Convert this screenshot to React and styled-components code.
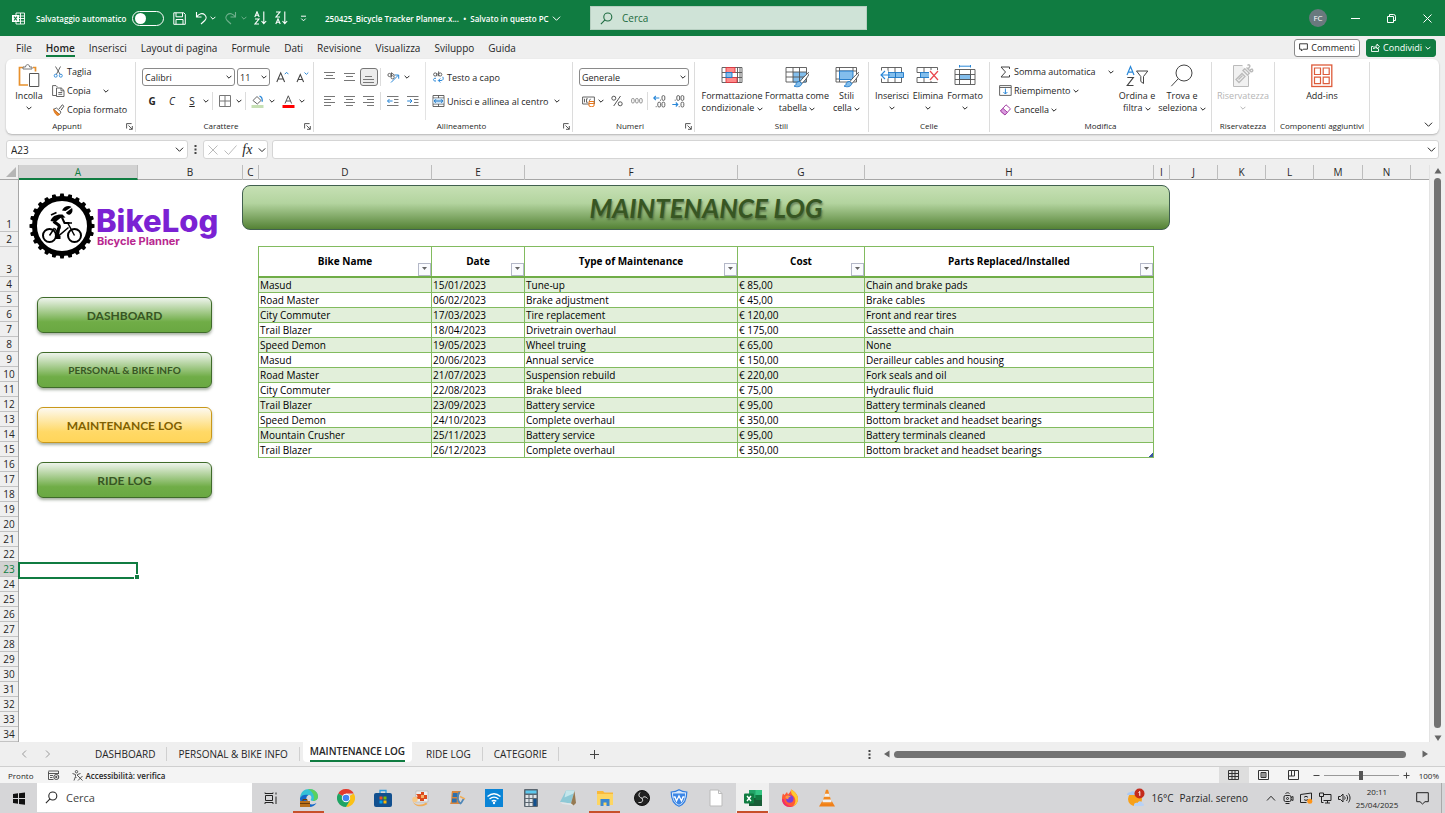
import { useState } from 'react'
import styled, { createGlobalStyle, css } from 'styled-components'

const GREEN = '#107c41'
const UI = '"Open Sans", "Noto Sans", sans-serif'
const SHAPE = 'Lato, "Open Sans", sans-serif'

const columns = [
  ['A', 119], ['B', 105], ['C', 16], ['D', 173], ['E', 93], ['F', 213], ['G', 127],
  ['H', 289], ['I', 16], ['J', 48], ['K', 48], ['L', 48], ['M', 49], ['N', 48],
]

const headers = [
  ['Bike Name', 173], ['Date', 93], ['Type of Maintenance', 213], ['Cost', 127], ['Parts Replaced/Installed', 289],
]

const log = [
  ['Masud', '15/01/2023', 'Tune-up', '€ 85,00', 'Chain and brake pads'],
  ['Road Master', '06/02/2023', 'Brake adjustment', '€ 45,00', 'Brake cables'],
  ['City Commuter', '17/03/2023', 'Tire replacement', '€ 120,00', 'Front and rear tires'],
  ['Trail Blazer', '18/04/2023', 'Drivetrain overhaul', '€ 175,00', 'Cassette and chain'],
  ['Speed Demon', '19/05/2023', 'Wheel truing', '€ 65,00', 'None'],
  ['Masud', '20/06/2023', 'Annual service', '€ 150,00', 'Derailleur cables and housing'],
  ['Road Master', '21/07/2023', 'Suspension rebuild', '€ 220,00', 'Fork seals and oil'],
  ['City Commuter', '22/08/2023', 'Brake bleed', '€ 75,00', 'Hydraulic fluid'],
  ['Trail Blazer', '23/09/2023', 'Battery service', '€ 95,00', 'Battery terminals cleaned'],
  ['Speed Demon', '24/10/2023', 'Complete overhaul', '€ 350,00', 'Bottom bracket and headset bearings'],
  ['Mountain Crusher', '25/11/2023', 'Battery service', '€ 95,00', 'Battery terminals cleaned'],
  ['Trail Blazer', '26/12/2023', 'Complete overhaul', '€ 350,00', 'Bottom bracket and headset bearings'],
]

/* ---------- icons ---------- */

const Icon = ({ w = 16, h = w, vb, children, ...rest }) => (
  <svg width={w} height={h} viewBox={vb || `0 0 ${w} ${h}`} fill="none" stroke="currentColor" aria-hidden="true" {...rest}>
    {children}
  </svg>
)

const Chevron = ({ size = 6, up }) => (
  <Icon w={size} h={size} vb="0 0 8 8" strokeWidth={8 / size}>
    <path d={up ? 'M.8 6 4 2.6 7.2 6' : 'M.8 2.4 4 5.6 7.2 2.4'} />
  </Icon>
)

const ExcelMark = () => (
  <Icon w={13} h={13} vb="0 0 13 13">
    <path d="M4 1h8.500v11H4zM4 4h8.500M4 6.500h8.500M4 9.200h8.500M8.500 1v11" strokeWidth=".9" />
    <path d="M0 3h7v7H0z" fill="currentColor" stroke="none" />
    <path d="M2 4.700 5 8.500M5 4.700 2 8.500" stroke={GREEN} strokeWidth="1.100" />
  </Icon>
)

const SaveIcon = () => (
  <Icon w={13} h={13} strokeWidth="1">
    <path d="M.8.8h10l1.500 1.500v10H.8zM3 .8v4h6.500v-4M3 12.300V7.500h7v4.800" />
  </Icon>
)

const UndoIcon = ({ flip }) => (
  <Icon w={13} h={14} strokeWidth="1.100">
    <g transform={flip ? 'translate(13 0) scale(-1 1)' : undefined}>
      <path d="M1.500 1v5h5M1.700 5.800C4 2.500 7.500 1.600 9.800 3.800c2 2 1.500 4.200 0 5.700L6 13" />
    </g>
  </Icon>
)

const SortIcon = ({ desc }) => {
  const a = 'M.8 6 3 .8 5.200 6M1.500 4.300h3'
  const z = 'M1 1h4L1 6h4'
  return (
    <Icon w={13} h={14} strokeWidth="1.100">
      <path d={desc ? z : a} />
      <path d={desc ? a : z} transform="translate(0 7)" />
      <path d="M9.800.5v12M7.500 10l2.300 2.600L12.200 10" />
    </Icon>
  )
}

const CustomizeIcon = () => (
  <Icon w={7} h={7} strokeWidth="1"><path d="M1 1.200h5M1.300 3.600l2.200 2.200 2.200-2.200" /></Icon>
)

const SearchIcon = ({ size = 12 }) => (
  <Icon w={size} vb="0 0 12 12" strokeWidth="1"><circle cx="7.200" cy="4.600" r="3.700" /><path d="M4.600 7.300.8 11.200" /></Icon>
)

const CommentIcon = () => (
  <Icon w={9} h={9} strokeWidth=".9"><path d="M.6.8h7.800v5.400H4.200L2.400 8V6.200H.6z" /></Icon>
)

const ShareIcon = () => (
  <Icon w={9} h={9} strokeWidth=".9"><path d="M2.500 3.500h-2v5h7v-3M2.500 6C2.700 4 4 3 6 3V1l2.500 2.700L6 6V4.500c-1.500 0-2.700.4-3.500 1.500z" /></Icon>
)

const PasteIcon = () => (
  <Icon w={22} h={24}>
    <path d="M6 3.500H1.500v17.500H10M15 3.500h2.500v4" stroke="#e8912d" strokeWidth="1.700" />
    <path d="M5 5V3h2.500C7.800 1.200 8.600.6 9.600.6s1.800.6 2.100 2.400H14v2z" stroke="#777" fill="#fff" />
    <path d="M11.500 9.500h9.300v13H11.500z" stroke="#555" fill="#fff" />
  </Icon>
)

const CutIcon = () => (
  <Icon w={10} h={12} strokeWidth=".9">
    <path d="M2 .5 6.700 8.500M7 .5 2.800 8.500" stroke="#555" />
    <circle cx="2.200" cy="9.700" r="1.500" stroke="#2b88d8" /><circle cx="7.300" cy="9.700" r="1.500" stroke="#2b88d8" />
  </Icon>
)

const CopyIcon = () => (
  <Icon w={13} h={12} strokeWidth=".9" stroke="#555">
    <path d="M4.500 10.500H.6V.6H4l1.500 1.500M4.500 3h4.800l2.700 2.500v6H4.500zM9 3v2.800h3M6.300 7.500h3.900M6.300 9.300h3.900" />
  </Icon>
)

const PainterIcon = () => (
  <Icon w={12} h={12}>
    <path d="M6.500 5 9.800.8l1.600 1.400L8.500 6.200" stroke="#555" />
    <path d="m1 5.300 3-1.300 4.500 4L7 10.500z" fill="#fff" stroke="#555" strokeWidth=".9" />
    <path d="m1 5.300 6 5.200-2 1.200C3 10.300 1.600 8 1 5.300z" fill="#ef8a2b" stroke="#d9741a" strokeWidth=".9" />
  </Icon>
)

const LauncherIcon = () => (
  <Icon w={7} h={7} strokeWidth=".9" stroke="#444"><path d="M.6 5.500V.6h5M2.500 2.500l3.700 3.700M6.300 3v3.300H3" /></Icon>
)

const FontSizeIcon = ({ down }) => (
  <Icon w={13} h={12}>
    <path d={down ? 'M1 11 4.300 3.500 7.600 11M2.200 8.500h4.200' : 'M.8 11 4.700 1.800 8.600 11M2.200 8h5'} stroke="#444" strokeWidth="1.100" />
    <path d={down ? 'm8.500 1.500 1.900 1.900 1.900-1.900' : 'M8.800 3.200l1.800-1.900 1.800 1.900'} stroke="#2b88d8" />
  </Icon>
)

const BordersIcon = () => (
  <Icon w={12} h={12} strokeWidth="1" stroke="#777"><path d="M.5.5h11v11H.5zM6 .5v11M.5 6h11" /></Icon>
)

const FillIcon = () => (
  <Icon w={13} h={13}>
    <path d="m2 5.500 4-4 4 4L6.300 9z" stroke="#555" strokeWidth=".9" />
    <path d="M8.500 1.200c1.700.5 3 2.300 2.700 5.500" stroke="#2b88d8" strokeWidth="1.300" />
    <path d="M.5 10h12v3H.5z" fill="#c6e0b4" stroke="none" />
  </Icon>
)

const FontColorIcon = () => (
  <Icon w={13} h={13}>
    <path d="M3 8.500 6.300.8l3.300 7.700M4 6h4.500" stroke="#555" strokeWidth="1" />
    <path d="M.5 10h12v3H.5z" fill="#f00" stroke="none" />
  </Icon>
)

const Lines = ({ rows, w = 12 }) => (
  <Icon w={w} h={12} stroke="#777" strokeWidth="1">
    {rows.map(([x1, x2, y]) => <path key={y} d={`M${x1} ${y}H${x2}`} />)}
  </Icon>
)

const alignTop = [[0, 11, 1.5], [2, 9, 4.5], [0, 11, 7.5]]
const alignMid = [[0, 11, 2.5], [2, 9, 5.5], [0, 11, 9.5]]
const alignBottom = [[2, 9, 5.5], [0, 11, 8.5], [0, 11, 11.5]]
const textLeft = [[0, 11, 1.5], [0, 7, 4.5], [0, 11, 7.5], [0, 7, 10.5]]
const textCenter = [[0, 11, 1.5], [2, 9, 4.5], [0, 11, 7.5], [2, 9, 10.5]]
const textRight = [[0, 11, 1.5], [4, 11, 4.5], [0, 11, 7.5], [4, 11, 10.5]]

const OrientIcon = () => (
  <Icon w={13} h={12}>
    <circle cx="2.500" cy="4" r="1.600" stroke="#555" strokeWidth=".9" /><circle cx="5.600" cy="6.300" r="1.600" stroke="#555" strokeWidth=".9" />
    <path d="M4.500 2v3.500M4 1.500 8 4.500" stroke="#555" strokeWidth=".9" />
    <path d="m4 11.500 7.500-7.500M8 4h3.700v3.700" stroke="#2b88d8" />
  </Icon>
)

const IndentIcon = ({ right }) => (
  <Icon w={12} h={12}>
    <path d="M0 1.500h11.500M7 4.500h4.500M7 7.500h4.500M0 10.500h11.500" stroke="#777" />
    <path d={right ? 'M.2 6h4.600M3 4l2 2-2 2' : 'M.6 6h5M2.500 4l-2 2 2 2'} stroke="#2b88d8" />
  </Icon>
)

const WrapIcon = () => (
  <Icon w={11} h={12}>
    <circle cx="2.200" cy="3.500" r="1.600" stroke="#555" strokeWidth=".9" /><circle cx="7.200" cy="3.500" r="1.600" stroke="#555" strokeWidth=".9" />
    <path d="M3.900 2v3.200M5.600.4v4.800" stroke="#555" strokeWidth=".9" />
    <path d="M3 7.300C1 7 .5 8 .5 8.700S1 10.200 3 10M9.800 5.800C10.800 8 10 9.500 8 9.500H5.500M7.300 7.500l-2 2 2 2" stroke="#2b88d8" />
  </Icon>
)

const MergeIcon = () => (
  <Icon w={12} h={12}>
    <path d="M.5.5h11v11H.5zM.5 3h11M.5 9h11M6 .5V3M6 9v2.500" stroke="#555" strokeWidth=".9" />
    <path d="M.9 3.400h10.200v5.200H.9z" fill="#cfe6f8" stroke="none" />
    <path d="M1.700 6h8.600M3.400 4.300 1.700 6l1.700 1.700M8.600 4.300 10.300 6 8.600 7.700" stroke="#1a76c7" />
  </Icon>
)

const CurrencyIcon = () => (
  <Icon w={13} h={12}>
    <path d="M.6 2h11.800v7H.6zM2.500 3.800v3.500M5.800 3.800H4.500v3.500h1.300M8.500 3.800l-1 1.700 1 1.800" stroke="#555" strokeWidth=".9" />
    <path d="M7 6.500h5V11c-1 .8-4 .8-5 0z" fill="#fff" stroke="#e8791e" /><path d="M7 8.500h5" stroke="#e8791e" />
  </Icon>
)

const PercentIcon = () => (
  <Icon w={12} h={12} stroke="#555"><circle cx="2.800" cy="3.200" r="2" /><circle cx="9.200" cy="8.800" r="2" /><path d="M9.500 1 2.700 11" /></Icon>
)

const ThousandsIcon = () => (
  <Icon w={12} h={8} stroke="#888" strokeWidth=".9"><rect x=".6" y="1.500" width="2.600" height="4.500" rx="1.200" /><rect x="4.600" y="1.500" width="2.600" height="4.500" rx="1.200" /><rect x="8.600" y="1.500" width="2.600" height="4.500" rx="1.200" /></Icon>
)

const DecimalIcon = ({ less }) => (
  <Icon w={13} h={13} strokeWidth=".9" stroke="#555">
    <rect x="9" y=".6" width="2.800" height="4.800" rx="1.300" /><rect x="9" y="7.200" width="2.800" height="4.800" rx="1.300" />
    {less ? <rect x="4.800" y=".6" width="2.800" height="4.800" rx="1.300" /> : <rect x="4.800" y="7.200" width="2.800" height="4.800" rx="1.300" />}
    <path d={less ? 'M2.700 5.200h1M6.700 11.700h1' : 'M7 5.200h1M2.700 11.700h1'} />
    <path d={less ? 'M.3 9.500h5.500M3.800 7.500l2 2-2 2' : 'M.8 3h5.500M2.800 1l-2 2 2 2'} stroke="#2b88d8" strokeWidth="1.100" />
  </Icon>
)

const CondFormatIcon = () => (
  <Icon w={22} h={22}>
    <path d="M1 2.500h20v15H1zM1 7.500h20M1 12.500h20M16.500 2.500v15M19 2.500v15" stroke="#555" strokeWidth=".9" />
    <path d="M5 2.500h9v5H5zM5 12.500h11v5H5z" fill="#ff8a8a" stroke="#d9363e" strokeWidth=".9" />
    <path d="M5 7.500h6v5H5z" fill="#83beec" stroke="#1a76c7" strokeWidth=".9" />
  </Icon>
)

const Brush = () => (
  <>
    <path d="M23.500 7.500c-3 2.500-7 7-8.500 9l1.800 2c2.500-2 6-6.500 7.500-10z" fill="#fff" stroke="#444" strokeWidth=".9" />
    <path d="M14.500 16.500c-2.500 0-3.500 1.500-3.500 3-.5 1-1 1.200-2 1.500 3 1.500 7.500.8 7.700-2.700z" fill="#83beec" stroke="#1a76c7" strokeWidth=".9" />
  </>
)

const FormatTableIcon = () => (
  <Icon w={24} h={22}>
    <path d="M8 7h13v11H8z" fill="#83beec" stroke="none" />
    <path d="M1 2.500h20.500v14.500H1zM1 7h20.500M1 12h20.500M8 2.500v14.500M14.500 2.500v14.500" stroke="#555" strokeWidth=".9" />
    <Brush />
  </Icon>
)

const CellStyleIcon = () => (
  <Icon w={24} h={22}>
    <path d="M1 2.500h20.500v14.500H1zM1 6h20.500M4.500 2.500v14.500M18 2.500V6M1 14h4" stroke="#555" strokeWidth=".9" />
    <path d="M4.500 6h13.500v8.500H4.500z" fill="#83beec" stroke="#1a76c7" strokeWidth=".9" />
    <Brush />
  </Icon>
)

const InsertCellsIcon = () => (
  <Icon w={24} h={22}>
    <path d="M1.500 2.500h20v15h-20zM8 2.500v15M15 2.500v15" stroke="#555" strokeWidth=".9" />
    <path d="M8 7.500h15.500v5H8z" fill="#83beec" stroke="#1a76c7" strokeWidth=".9" />
    <path d="M15.500 7.500v5" stroke="#1a76c7" />
    <path d="M0 5.500h8v8H0z" fill="#fff" stroke="none" />
    <path d="M1 10h9M5 6l-4 4 4 4" stroke="#2b88d8" strokeWidth="1.100" />
  </Icon>
)

const DeleteCellsIcon = () => (
  <Icon w={24} h={22}>
    <path d="M1 7.500v-5h20.500v5M1 12.500v5h20.500M8 2.500v5M15 2.500v5M8 12.500v5M15 12.500v5M1 7.500h4M1 12.500h4" stroke="#555" strokeWidth=".9" />
    <path d="M4.500 7.500h10v5h-10z" fill="#83beec" stroke="#1a76c7" strokeWidth=".9" />
    <path d="M13 5h10v11H13z" fill="#fff" stroke="none" />
    <path d="m14 6 8 9M22 6l-8 9" stroke="#e8464e" strokeWidth="1.200" />
  </Icon>
)

const FormatCellsIcon = () => (
  <Icon w={22} h={22}>
    <path d="M5.500 9.500h11v5h-11z" fill="#83beec" stroke="#1a76c7" strokeWidth=".9" />
    <path d="M1 4.500h20v15H1zM1 9.500h20M1 14.500h20M5.500 4.500v15M16.500 4.500v15" stroke="#555" strokeWidth=".9" />
    <path d="M5.500 1.200h11M5.500 0v2.500M16.500 0v2.500" stroke="#2b88d8" />
  </Icon>
)

const SigmaIcon = () => (
  <Icon w={12} h={12} stroke="#444"><path d="M10 3V1H1.500L6 6l-4.500 5H10V9" /></Icon>
)

const FillDownIcon = () => (
  <Icon w={13} h={11}>
    <path d="M.6.600h11.600v9.800H.6zM.6 2.500h11.600" stroke="#555" strokeWidth=".9" />
    <path d="M6.400 3.500v5.500M4.400 7l2 2 2-2" stroke="#2b88d8" />
  </Icon>
)

const EraserIcon = () => (
  <Icon w={12} h={12}>
    <path d="M1 7 6.500.8l4.500 4L5.500 11z" fill="#fff" stroke="#a645a6" />
    <path d="m1 7 4.500 4 2.400-2.700L3.400 4.300z" fill="#d99ade" stroke="#a645a6" />
  </Icon>
)

const SortFilterIcon = () => (
  <Icon w={24} h={22}>
    <path d="M2 10 5.500 1.500 9 10M3.200 7.200h4.700" stroke="#2b88d8" strokeWidth="1.200" />
    <path d="M2.300 12.500h6L2.300 20.500h6.200" stroke="#444" strokeWidth="1.200" />
    <path d="M11.500 6h11.300L18.500 11.500v7l-2.700-2v-5z" stroke="#444" />
  </Icon>
)

const FindIcon = () => (
  <Icon w={24} h={24} stroke="#444"><circle cx="14" cy="9" r="8" /><path d="m8.300 14.700-7 7.500" /></Icon>
)

const PrivacyIcon = () => (
  <Icon w={22} h={24} stroke="#bbb">
    <path d="M16.500 11.500v11H1.500V1.500h9" fill="#f1f1f1" />
    <path d="m4 15.500 6-6 3 3-6 6zM6.500 15.500l4-4" strokeWidth="1.300" />
    <path d="m11 6.500 4.500 4.500 1.800-1.800-4.500-4.500zM14.500 3.500l4 4M15.500 1.500c1.500-1.500 3 0 2 1.500l-1 1.500M18.500 7.500c2 1 3-1 1.500-2.500L18 6" strokeWidth="1.400" />
  </Icon>
)

const AddinsIcon = () => (
  <Icon w={22} h={24} stroke="#dd5b3a">
    <rect x=".8" y="1" width="20" height="21.500" strokeWidth="1.300" />
    <path d="M3.500 4h6v6.500h-6zM12.200 4h6v6.500h-6zM3.500 13.200h6v6.500h-6zM12.200 13.200h6v6.500h-6z" strokeWidth="1.200" />
  </Icon>
)

const DotsIcon = () => (
  <Icon w={3} h={9} stroke="none" fill="#444"><path d="M.5 0h2v2h-2zM.5 3.500h2v2h-2zM.5 7h2v2h-2z" /></Icon>
)

const Triangle = ({ dir }) => (
  <Icon w={8} h={8} stroke="none" fill="#666">
    <path d={{ up: 'M4 1l3.500 5.500h-7z', down: 'M4 7 .5 1.500h7z', left: 'M1 4l5.500-3.500v7z', right: 'M7 4 1.500.500v7z' }[dir]} />
  </Icon>
)

/* gear with cyclist, used in the planner logo */
const BikeBadge = () => (
  <svg width="66" height="66" viewBox="0 0 66 66" aria-hidden="true">
    {Array.from({ length: 24 }, (_, i) => (
      <path key={i} d="M30.500 4.500 31.300.500h3.400l.8 4z" transform={`rotate(${i * 15} 33 33)`} />
    ))}
    <circle cx="33" cy="33" r="27.500" fill="#fff" stroke="#000" strokeWidth="5" />
    <g fill="none" stroke="#000">
      <circle cx="20.500" cy="42.500" r="6.500" strokeWidth="2" />
      <circle cx="45.500" cy="42.500" r="6.500" strokeWidth="2" />
      <path d="M20.500 42.500 25.500 35M26 35.500l4 7 9.500-8M39 30.500l6.500 12M37.500 30h5.500" strokeWidth="1.500" />
      <path d="M24.500 28.500c4 2.500 7.500 4 5 7.500l-1.500 8.500h3.500" strokeWidth="3.200" />
      <path d="m33 24.500 2.500 5.500h5" strokeWidth="2" />
      <path d="m22 22 5.500-2.500" strokeWidth="1.800" />
    </g>
    <path d="M21.500 28c1.500-5 6-7 12-6.500l3 3-5 .5-5 4z" />
    <path d="M33 17.500c2-4.500 7-5.500 9.500-3.500L36.500 18zM37 19.500l6-4.500c1 2 .5 5.500-2 6.500-1.500.6-3.500-.2-4-2z" />
  </svg>
)

/* task bar pictures */
const StartIcon = () => (
  <Icon w={14} h={13} stroke="none" fill="#111"><path d="M1 2l5-.7V6H1zM7 1.200 13 .4V6H7zM1 7h5v4.700L1 11zM7 7h6v5.700l-6-.8z" /></Icon>
)
const TaskViewIcon = () => (
  <Icon w={14} h={13} stroke="#222"><path d="M1.500 3.500h7v5h-7zM1 .5v1h8v-1M1 12v-1.500h8V12M12 4.500V12M12 .5v2" /></Icon>
)
const EdgeIcon = () => (
  <Icon w={20} h={20} stroke="none">
    <path d="M1 10C1.500 4 5.500.8 10.500 1c5 .2 8.500 3.700 8.500 7.500 0 3-2.500 4.500-5 4.500-2 0-2.700-1-2-2 .8-1.500.5-4-2.500-4C6 7 3 8 1 10z" fill="#35c1d6" />
    <path d="M9 1.100c5.500-.7 10 3 10 7.400 0 3-2.500 4.500-5 4.500 3-4-1-10-5-11.900z" fill="#5bd15c" />
    <path d="M1 10c1.500-3 5-4 8.500-3-3 1.500-3 6 .5 8.500 2.500 1.500 5 1 7.500-.5-2 3-5 4.500-8 4C4 18.500.7 15 1 10z" fill="#1468c8" />
    <path d="M1 13h10v6H1z" fill="#b8711c" /><path d="M4 13v-1.500h4V13M1 15.500h10" stroke="#6b3d0a" />
  </Icon>
)
const ChromeIcon = () => (
  <Icon w={18} h={18} stroke="none">
    <path d="M9 9 1.200 4.500A9 9 0 0 1 16.800 4.500H9z" fill="#e33b2e" />
    <path d="M9 9l7.800-4.500A9 9 0 0 1 9 18l4-7z" fill="#fbc116" />
    <path d="M9 9l4 2.300L9 18A9 9 0 0 1 1.200 4.500z" fill="#1fa463" />
    <circle cx="9" cy="9" r="4.200" fill="#fff" /><circle cx="9" cy="9" r="3.300" fill="#4285f4" />
  </Icon>
)
const StoreIcon = () => (
  <Icon w={18} h={18} stroke="none">
    <path d="M6 5V1.500h6V5" stroke="#2a9de0" strokeWidth="1.300" /><rect y="4" width="18" height="14" rx="2" fill="#12508f" />
    <path d="M5.500 7.500h3v3h-3z" fill="#f25022" /><path d="M9.500 7.500h3v3h-3z" fill="#7fba00" />
    <path d="M5.500 11.500h3v3h-3z" fill="#00a4ef" /><path d="M9.500 11.500h3v3h-3z" fill="#ffb900" />
  </Icon>
)
const PhotoIcon = () => (
  <Icon w={18} h={18} stroke="none">
    <path d="M5 2h12v11H4z" fill="#eee" stroke="#bbb" strokeWidth=".8" />
    <path d="M5 5h5v-2h3v3h3v4h-3v2H9v-2H5.500V7.500H7z" fill="#dc4a1c" /><path d="M10 6h3v3h-3z" fill="#f7b267" />
    <path d="M1.500 11c1 5.500 9 6 13.500 2.500L16.500 15c-5.500 4-14 3-15-4z" fill="#f1ad57" /><circle cx="4" cy="10.500" r="2.700" fill="#f6c987" />
  </Icon>
)
const FilmIcon = () => (
  <Icon w={18} h={18} stroke="none">
    <path d="M4 2h9c-3 4-3 9 0 13H2c2-3 1-9 2-13z" fill="#d9863d" /><path d="M5 4h4.500v4H4.500zM4 9.500h4.700v4H4z" fill="#2f70ad" />
    <path d="M11.500 3c-2.500 4-2.500 9 1 11.500 1.500-.5 1.500-3.500 3.500-4.500" stroke="#4e87b8" strokeWidth="1.700" /><path d="M12 7.500l5 2.500" stroke="#efad58" strokeWidth="1.500" />
  </Icon>
)
const WifiIcon = () => (
  <Icon w={18} h={18} stroke="#fff">
    <path d="M0 0h18v18H0z" fill="#0a84d6" stroke="none" />
    <path d="M2.500 7.500c4-3.500 9-3.500 13 0M4.500 10c3-2.500 6-2.500 9 0M6.700 12.300c1.500-1.200 3-1.200 4.600 0" strokeWidth="1.400" />
    <circle cx="9" cy="14" r="1.200" fill="#fff" stroke="none" />
  </Icon>
)
const CalcIcon = () => (
  <Icon w={14} h={18} stroke="none">
    <rect width="14" height="18" rx="1" fill="#5b6670" /><path d="M1.500 1.500h11v3h-11z" fill="#5cc8ee" />
    <path d="M1.500 6h3v3h-3zM5.500 6h3v3h-3zM9.500 6h3v3h-3zM1.500 10h3v3h-3zM5.500 10h3v3h-3zM1.500 14h3v3h-3zM5.500 14h3v3h-3z" fill="#dfe4e8" />
    <path d="M9.500 10h3v7h-3z" fill="#12508f" />
  </Icon>
)
const NotepadIcon = () => (
  <Icon w={18} h={18} stroke="none">
    <path d="M7 1.500h8.500L12 14.500 1 13z" fill="#8ec9d6" /><path d="M7 1.500h8.500l-1 3-9 4z" fill="#c4e6ec" />
    <path d="M15.500 2 17 14l-2.500 2.500L12 14.500z" fill="#967a52" /><path d="m1 13 11 1.500 2.500 2-11-1.500z" fill="#dfe6e8" />
  </Icon>
)
const FolderIcon = () => (
  <Icon w={18} h={16} stroke="none">
    <path d="M1 1h6l1.500 1.500H17V15H1z" fill="#f9b93a" /><path d="M1 4h16v11H1z" fill="#fdd663" />
    <path d="M4.500 16V9h9v7h-3v-3.500h-3V16z" fill="#3a87d0" />
  </Icon>
)
const ObsIcon = () => (
  <Icon w={16} h={16} stroke="#eee" strokeWidth="1">
    <circle cx="8" cy="8" r="7.500" fill="#222" stroke="#111" />
    <path d="M6 2.500c-2.500 3 0 5.500 2 5.500M13.500 8.500c-2.500-3-5-1.500-5.500.5M4.500 12.500c4 .5 5-2 3.500-4" />
  </Icon>
)
const ShieldIcon = () => (
  <Icon w={18} h={18} stroke="#2f7de0">
    <path d="M9 .8C6.500 2.500 4 3 1.200 3c0 7 2 12 7.800 14.300C14.800 15 16.800 10 16.800 3 14 3 11.500 2.500 9 .8z" fill="#d6e7fb" strokeWidth="1.200" />
    <path d="M3 4.500c0 6 2 9.500 6 11.300 4-1.800 6-5.300 6-11.300z" fill="#3b86e6" stroke="none" />
    <path d="M3.500 8h1.500l1.500 4L9 7l2.500 5L13 8h1.500" stroke="#fff" strokeWidth="1.300" />
  </Icon>
)
const PageIcon = () => (
  <Icon w={14} h={18} stroke="#bbb"><path d="M1 1h8.500L13 4.500V17H1z" fill="#fff" /><path d="M9.500 1v3.500H13" /></Icon>
)
const ExcelIcon = () => (
  <Icon w={20} h={18} stroke="none">
    <path d="M6 1h13v16H6z" fill="#21a366" /><path d="M12.500 1H19v5h-6.500z" fill="#33c481" /><path d="M6 9h13v8H6z" fill="#185c37" /><path d="M12.500 6H19v5h-6.500z" fill="#107c41" />
    <rect x="1" y="4.500" width="10" height="10" rx="1" fill="#107c41" /><path d="m4 7 4 5M8 7l-4 5" stroke="#fff" strokeWidth="1.400" />
  </Icon>
)
const FirefoxIcon = () => (
  <Icon w={18} h={18} stroke="none">
    <path d="M2 4.500 3.500 6 6 3l1 2.500C9 3 10 2.500 10 .5c4 2 7 5.500 7 9.500a8 8 0 0 1-16 0c0-2 .3-4 1-5.500z" fill="#ff5a36" />
    <path d="M10 .5c4 2 7 5.500 7 9.500a8 8 0 0 1-5 7.300c3.500-3.300 3-8.300-.5-11.300C10 4.500 10 2.500 10 .5z" fill="#ffca2e" />
    <path d="M1 10c0 5 3.500 8 8 8 1.500 0 2-.2 3-.7-4 .2-8.500-2-9-7.300z" fill="#f0306a" />
    <circle cx="8.800" cy="10" r="3.700" fill="#7b40d9" /><path d="M4.500 7.500C6 6 9 6.300 10 8.200c-2-.5-3 .5-2.500 2-2 0-3.500-1-3-2.700z" fill="#ff9640" />
  </Icon>
)
const VlcIcon = () => (
  <Icon w={16} h={18} stroke="none">
    <path d="M3 12.500h10l3 5H0z" fill="#f08018" /><path d="M7 .8h2L13 15H3z" fill="#f3891f" />
    <path d="M5.900 4.700h4.200l.9 3H5zM4.200 10.500h7.600l.7 2.700h-9z" fill="#f2f2f2" />
  </Icon>
)

const tasks = [
  ['Edge', EdgeIcon, true], ['Chrome', ChromeIcon], ['Store', StoreIcon], ['Foto', PhotoIcon], ['Video', FilmIcon], ['WiFi', WifiIcon],
  ['Calcolatrice', CalcIcon], ['Blocco note', NotepadIcon], ['Esplora file', FolderIcon, true], ['OBS', ObsIcon], ['Sicurezza', ShieldIcon],
  ['Documento', PageIcon], ['Excel', ExcelIcon, true, true], ['Firefox', FirefoxIcon], ['VLC', VlcIcon],
]

/* ---------- page ---------- */

export default function App() {
  const [autosave, setAutosave] = useState(false)
  const [zoom, setZoom] = useState(50)

  return (
    <Window>
      <GlobalStyle />
      <TitleBar>
        <QuickAccess>
          <Slot $w={36}><ExcelMark /></Slot>
          <AutosaveLabel htmlFor="autosave">Salvataggio automatico</AutosaveLabel>
          <Toggle id="autosave" type="checkbox" checked={autosave} onChange={e => setAutosave(e.target.checked)} />
          <TitleButton $w={31} aria-label="Salva"><SaveIcon /></TitleButton>
          <TitleButton $w={12} aria-label="Annulla"><UndoIcon /></TitleButton>
          <TitleButton $w={12} aria-label="Cronologia annulla"><Chevron /></TitleButton>
          <TitleButton $w={22} $dim aria-label="Ripeti"><UndoIcon flip /></TitleButton>
          <TitleButton $w={6} $dim aria-label="Cronologia ripeti"><Chevron /></TitleButton>
          <TitleButton $w={26} aria-label="Ordina dalla A alla Z"><SortIcon /></TitleButton>
          <TitleButton $w={16} aria-label="Ordina dalla Z alla A"><SortIcon desc /></TitleButton>
          <TitleButton $w={28} aria-label="Personalizza"><CustomizeIcon /></TitleButton>
          <FileName>250425_Bicycle Tracker Planner.x... &nbsp;•&nbsp; Salvato in questo PC <Chevron size={9} /></FileName>
        </QuickAccess>
        <TitleSearch>
          <SearchIcon size={13} />
          <input aria-label="Cerca" placeholder="Cerca" />
        </TitleSearch>
        <WindowButtons>
          <Avatar>FC</Avatar>
          <TitleButton $w={36} aria-label="Riduci a icona"><Icon w={9} h={9}><path d="M0 4.500h9" /></Icon></TitleButton>
          <TitleButton $w={36} aria-label="Ripristina"><Icon w={9} h={9}><path d="M.5 2.500h6v6h-6zM2.500 2.500V.5h4a2 2 0 0 1 2 2v4h-2" /></Icon></TitleButton>
          <TitleButton $w={36} aria-label="Chiudi"><Icon w={9} h={9}><path d="m.5.500 8 8M8.500.5l-8 8" /></Icon></TitleButton>
        </WindowButtons>
      </TitleBar>

      <MenuBar>
        {['File', 'Home', 'Inserisci', 'Layout di pagina', 'Formule', 'Dati', 'Revisione', 'Visualizza', 'Sviluppo', 'Guida'].map(m => (
          <MenuItem key={m} $active={m === 'Home'}>{m}</MenuItem>
        ))}
        <Spacer />
        <CommentButton><CommentIcon />Commenti</CommentButton>
        <CommentButton $primary><ShareIcon />Condividi<Chevron size={6} /></CommentButton>
      </MenuBar>

      <Ribbon>
        <Group $w={130}>
          <GroupBody>
            <BigButton $w={46}><PasteIcon /><span>Incolla</span><Chevron /></BigButton>
            <SmallStack $w={82}>
              <SmallButton><CutIcon />Taglia</SmallButton>
              <SmallButton><CopyIcon />Copia<Push><Chevron /></Push></SmallButton>
              <SmallButton><PainterIcon />Copia formato</SmallButton>
            </SmallStack>
          </GroupBody>
          <GroupName>Appunti<LauncherIcon /></GroupName>
        </Group>

        <Group $w={178}>
          <GroupBody>
            <ToolRows>
              <ToolRow>
                <Dropdown $w={93}><select aria-label="Tipo di carattere"><option>Calibri</option></select><Chevron /></Dropdown>
                <Dropdown $w={33}><select aria-label="Dimensione"><option>11</option></select><Chevron /></Dropdown>
                <Tool $w={20} aria-label="Aumenta dimensione"><FontSizeIcon /></Tool>
                <Tool $w={20} aria-label="Riduci dimensione"><FontSizeIcon down /></Tool>
              </ToolRow>
              <ToolRow>
                <Tool $w={20}><b>G</b></Tool>
                <Tool $w={20}><i>C</i></Tool>
                <Tool $w={20}><u>S</u></Tool>
                <Tool $w={8} aria-label="Stili sottolineatura"><Chevron /></Tool>
                <Divider />
                <Tool $w={20} aria-label="Bordi"><BordersIcon /></Tool>
                <Tool $w={8} aria-label="Opzioni bordi"><Chevron /></Tool>
                <Divider />
                <Tool $w={18} aria-label="Riempimento"><FillIcon /></Tool>
                <Tool $w={12} aria-label="Colori riempimento"><Chevron /></Tool>
                <Tool $w={20} aria-label="Colore carattere"><FontColorIcon /></Tool>
                <Tool $w={8} aria-label="Colori carattere"><Chevron /></Tool>
              </ToolRow>
            </ToolRows>
          </GroupBody>
          <GroupName>Carattere<LauncherIcon /></GroupName>
        </Group>

        <Group $w={259}>
          <GroupBody>
            <ToolRows>
              <ToolRow>
                <Tool $w={20} aria-label="Allinea in alto"><Lines rows={alignTop} /></Tool>
                <Tool $w={20} aria-label="Allinea al centro"><Lines rows={alignMid} /></Tool>
                <Tool $w={18} $on aria-label="Allinea in basso"><Lines rows={alignBottom} /></Tool>
                <Divider />
                <Tool $w={20} aria-label="Orientamento"><OrientIcon /></Tool>
                <Tool $w={8} aria-label="Opzioni orientamento"><Chevron /></Tool>
              </ToolRow>
              <ToolRow>
                <Tool $w={20} aria-label="A sinistra"><Lines rows={textLeft} /></Tool>
                <Tool $w={20} aria-label="Al centro"><Lines rows={textCenter} /></Tool>
                <Tool $w={18} aria-label="A destra"><Lines rows={textRight} /></Tool>
                <Divider />
                <Tool $w={20} aria-label="Riduci rientro"><IndentIcon /></Tool>
                <Tool $w={20} aria-label="Aumenta rientro"><IndentIcon right /></Tool>
              </ToolRow>
            </ToolRows>
            <ToolRows $line>
              <SmallButton $tall><WrapIcon />Testo a capo</SmallButton>
              <SmallButton $tall><MergeIcon />Unisci e allinea al centro<Push $near><Chevron /></Push></SmallButton>
            </ToolRows>
          </GroupBody>
          <GroupName $shift>Allineamento<LauncherIcon /></GroupName>
        </Group>

        <Group $w={122}>
          <GroupBody>
            <ToolRows>
              <ToolRow>
                <Dropdown $w={110}><select aria-label="Formato numero"><option>Generale</option></select><Chevron /></Dropdown>
              </ToolRow>
              <ToolRow>
                <Tool $w={18} aria-label="Valuta"><CurrencyIcon /></Tool>
                <Tool $w={8} aria-label="Altre valute"><Chevron /></Tool>
                <Tool $w={24} aria-label="Percentuale"><PercentIcon /></Tool>
                <Tool $w={16} aria-label="Migliaia"><ThousandsIcon /></Tool>
                <Divider />
                <Tool $w={18} aria-label="Aumenta decimali"><DecimalIcon /></Tool>
                <Tool $w={20} aria-label="Diminuisci decimali"><DecimalIcon less /></Tool>
              </ToolRow>
            </ToolRows>
          </GroupBody>
          <GroupName>Numeri<LauncherIcon /></GroupName>
        </Group>

        <Group $w={174}>
          <GroupBody>
            <BigButton $w={74}><CondFormatIcon /><span>Formattazione<br />condizionale <Chevron /></span></BigButton>
            <BigButton $w={56}><FormatTableIcon /><span>Formatta come<br />tabella <Chevron /></span></BigButton>
            <BigButton $w={43}><CellStyleIcon /><span>Stili<br />cella <Chevron /></span></BigButton>
          </GroupBody>
          <GroupName>Stili</GroupName>
        </Group>

        <Group $w={121}>
          <GroupBody>
            <BigButton $w={46}><InsertCellsIcon /><span>Inserisci</span><Chevron /></BigButton>
            <BigButton $w={26}><DeleteCellsIcon /><span>Elimina</span><Chevron /></BigButton>
            <BigButton $w={48}><FormatCellsIcon /><span>Formato</span><Chevron /></BigButton>
          </GroupBody>
          <GroupName>Celle</GroupName>
        </Group>

        <Group $w={222}>
          <GroupBody>
            <SmallStack $w={125} $pad>
              <SmallButton><SigmaIcon />Somma automatica<Push><Chevron /></Push></SmallButton>
              <SmallButton><FillDownIcon />Riempimento<Chevron /></SmallButton>
              <SmallButton><EraserIcon />Cancella<Chevron /></SmallButton>
            </SmallStack>
            <BigButton $w={44}><SortFilterIcon /><span>Ordina e<br />filtra <Chevron /></span></BigButton>
            <BigButton $w={46}><FindIcon /><span>Trova e<br />seleziona <Chevron /></span></BigButton>
          </GroupBody>
          <GroupName>Modifica</GroupName>
        </Group>

        <Group $w={63}>
          <GroupBody>
            <BigButton $w={62} disabled><PrivacyIcon /><span>Riservatezza</span><Chevron /></BigButton>
          </GroupBody>
          <GroupName>Riservatezza</GroupName>
        </Group>

        <Group $w={95}>
          <GroupBody>
            <BigButton $w={94}><AddinsIcon /><span>Add-ins</span></BigButton>
          </GroupBody>
          <GroupName>Componenti aggiuntivi</GroupName>
        </Group>
        <Collapse aria-label="Comprimi barra multifunzione"><Chevron size={9} /></Collapse>
      </Ribbon>

      <FormulaBar>
        <NameBox><input aria-label="Casella nome" defaultValue="A23" /><Chevron size={9} /></NameBox>
        <DotsIcon />
        <FxBox>
          <Icon w={10} h={10} stroke="#bbb"><path d="m.5.500 9 9M9.500.5l-9 9" /></Icon>
          <Icon w={13} h={10} stroke="#bbb"><path d="m.5 5.500 4 4 8-9" /></Icon>
          <Fx>fx</Fx>
          <Chevron size={8} />
        </FxBox>
        <FormulaBox><input aria-label="Formula" /><Chevron size={9} /></FormulaBox>
      </FormulaBar>

      <SheetArea>
        <Sheet>
          <ColumnHeads>
            <Corner><Icon w={10} h={10} stroke="none" fill="#b5b5b5"><path d="M10 0v10H0z" /></Icon></Corner>
            {columns.map(([name, w]) => <ColumnHead key={name} $w={w} $active={name === 'A'}>{name}</ColumnHead>)}
          </ColumnHeads>
          <SheetBody>
            <RowHeads>
              {Array.from({ length: 34 }, (_, i) => (
                <RowHead key={i} $h={i === 0 ? 52 : i === 2 ? 30 : 15} $active={i === 22}>{i + 1}</RowHead>
              ))}
            </RowHeads>
            <SidePanel>
              <Logo>
                <BikeBadge />
                <div>
                  <LogoName>BikeLog</LogoName>
                  <LogoSub>Bicycle Planner</LogoSub>
                </div>
              </Logo>
              <SideNav>
                <NavButton>DASHBOARD</NavButton>
                <NavButton $small>PERSONAL &amp; BIKE INFO</NavButton>
                <NavButton $gold>MAINTENANCE LOG</NavButton>
                <NavButton>RIDE LOG</NavButton>
              </SideNav>
              <SelectedCell />
            </SidePanel>
            <MainPanel>
              <Banner>MAINTENANCE LOG</Banner>
              <LogTable>
                <colgroup>{headers.map(([h, w]) => <Col key={h} $w={w} />)}</colgroup>
                <thead>
                  <tr>
                    {headers.map(([h]) => (
                      <th key={h}>{h}<FilterButton aria-label={`Filtra ${h}`}><Icon w={7} h={4} stroke="none" fill="#666"><path d="M1 0h5L3.500 3z" /></Icon></FilterButton></th>
                    ))}
                  </tr>
                </thead>
                <tbody>
                  {log.map((row, i) => <tr key={i}>{row.map((c, j) => <td key={j}>{c}</td>)}</tr>)}
                </tbody>
              </LogTable>
            </MainPanel>
          </SheetBody>
        </Sheet>
        <VScroll><Triangle dir="up" /><VThumb /><Triangle dir="down" /></VScroll>
      </SheetArea>

      <TabBar>
        <Arrows>
          <Icon w={6} h={8} stroke="#999"><path d="M5 .5 1.500 4 5 7.500" /></Icon>
          <Icon w={6} h={8} stroke="#999"><path d="M1 .5 4.500 4 1 7.500" /></Icon>
        </Arrows>
        <SheetTab>DASHBOARD</SheetTab>
        <SheetTab>PERSONAL &amp; BIKE INFO</SheetTab>
        <SheetTab $active><span>MAINTENANCE LOG</span></SheetTab>
        <SheetTab>RIDE LOG</SheetTab>
        <SheetTab>CATEGORIE</SheetTab>
        <AddTab aria-label="Nuovo foglio"><Icon w={9} h={9} stroke="#444"><path d="M4.500 0v9M0 4.500h9" /></Icon></AddTab>
        <Spacer />
        <HScroll><DotsIcon /><Gap /><Triangle dir="left" /><HThumb /><Triangle dir="right" /></HScroll>
      </TabBar>

      <StatusBar>
        <span>Pronto</span>
        <Icon w={12} h={10} stroke="#444"><path d="M.5 1.500v8h5M.5 1h10v3M.5 3.500h10M2 5.500h3M2 7.500h2.500" strokeWidth=".9" /><circle cx="8.300" cy="7" r="2.500" /><circle cx="8.300" cy="7" r=".7" fill="#444" /></Icon>
        <Access>
          <Icon w={11} h={11} stroke="#444" strokeWidth=".9"><circle cx="4.500" cy="1.700" r="1.200" /><path d="M.5 3.500 3.500 4.500v2l-1.500 4M8.500 3.500l-3 1v1.500M3.500 8l1-1M6 6l4.500 4.500M10.500 6 6 10.500" /></Icon>
          Accessibilità: verifica
        </Access>
        <Spacer />
        <ViewButton $on aria-label="Normale"><Icon w={11} h={10} stroke="#333"><path d="M.5.500h10v9H.5zM.5 3.500h10M.5 6.500h10M4 .5v9M7 .5v9" /></Icon></ViewButton>
        <ViewButton aria-label="Layout di pagina"><Icon w={11} h={10} stroke="#333"><path d="M.5.500h10v9H.5zM3 2.500h5v5H3zM3.500 4h4M3.500 6h4" /></Icon></ViewButton>
        <ViewButton aria-label="Anteprima interruzioni"><Icon w={11} h={10} stroke="#333"><path d="M.5.500h10v9H.5zM.5 6h6V.5M3.500.5V6" /></Icon></ViewButton>
        <ZoomBox>
          <Icon w={7} h={7} stroke="#444"><path d="M.5 3.500h6" /></Icon>
          <input type="range" aria-label="Zoom" value={zoom} onChange={e => setZoom(+e.target.value)} />
          <Icon w={7} h={7} stroke="#444"><path d="M.5 3.500h6M3.500.5v6" /></Icon>
        </ZoomBox>
        <span>100%</span>
      </StatusBar>

      <TaskBar>
        <TaskButton $w={37} aria-label="Start"><StartIcon /></TaskButton>
        <TaskSearch><SearchIcon size={13} /><input aria-label="Cerca in Windows" placeholder="Cerca" /></TaskSearch>
        <TaskButton $w={38} aria-label="Visualizzazione attività"><TaskViewIcon /></TaskButton>
        {tasks.map(([name, Pic, open, front]) => (
          <TaskButton key={name} $w={37} $open={open} $front={front} aria-label={name}><Pic /></TaskButton>
        ))}
        <Spacer />
        <Weather>
          <Icon w={20} h={20} stroke="none">
            <circle cx="9" cy="11" r="7" fill="#f7a11a" />
            <path d="M1 7c0-2 2-3 3.500-2.500C6 2 10 3 10 7z" fill="#a9c9f5" />
            <path d="M8 18c-.5-3 2-4 3.500-3 1-2.500 5-2 5 .500 2 0 2 2.500 0 2.500z" fill="#b7d2f7" />
            <circle cx="13.500" cy="5.500" r="5" fill="#c42b1c" />
            <path d="M12.500 4.500 13.800 3.500v4.300" stroke="#fff" />
          </Icon>
          <span>16°C</span><span>Parzial. sereno</span>
        </Weather>
        <Tray>
          <Chevron size={10} up />
          <Icon w={12} h={12} stroke="#222"><rect x="2" y="3.500" width="7" height="6" rx="1.500" /><path d="m9 5.500 2-1v4l-2-1M3.500 1.500c1.500-1 3-1 4 0M3.500 11.500h4" /><circle cx="5.500" cy="6.500" r="1" /></Icon>
          <Icon w={13} h={12} stroke="#222"><path d="m.5 2.500 11-1.500v7M.5 2.500v8h6M4 5.500c1-1.500 3-1.500 4 0M8 7.500c-1 1-3 1-4 0" /><circle cx="9.800" cy="9.200" r="2.500" fill="#ff9416" stroke="none" /></Icon>
          <Icon w={13} h={12} stroke="#222"><path d="M4.500 2.500H12v6H4.500M6 11h5M8.500 8.500V11M.5 1h4v3.500h-4zM2.500 4.500v6h2" /></Icon>
          <Icon w={13} h={12} stroke="#222"><path d="M.5 4.500v3h2l2.500 2.500V2L2.500 4.500zM6.500 4.500c.8 1 .8 2 0 3M8.500 3c1.500 2 1.500 4 0 6M10.500 1.500c2 3 2 6 0 9" /></Icon>
        </Tray>
        <Clock>20:11<br />25/04/2025</Clock>
        <TaskButton $w={38} aria-label="Notifiche"><Icon w={13} h={13} stroke="#222"><path d="M.7.700h11.600v9H9L6.500 12 4 9.700H.7z" /></Icon></TaskButton>
        <ShowDesktop aria-label="Mostra desktop" />
      </TaskBar>
    </Window>
  )
}

/* ---------- styles ---------- */

const GlobalStyle = createGlobalStyle`
  * { box-sizing: border-box; }
  body { margin: 0; background: #efefef; font-family: ${UI}; color: #262626; }
  button, input, select { font: inherit; color: inherit; margin: 0; padding: 0; border: 0; background: none; }
  input { outline: 0; min-width: 0; }
  svg { flex: none; display: block; }
`

const Window = styled.div`
  display: flex;
  flex-direction: column;
  height: 100vh;
  overflow: hidden;
  font-size: 9px;
`

const Spacer = styled.div`
  flex: 1;
`

/* title bar */

const TitleBar = styled.header`
  display: grid;
  grid-template-columns: 590px minmax(120px, 277px) 1fr;
  align-items: center;
  height: 36px;
  flex: none;
  background: ${GREEN};
  color: #fff;
`

const QuickAccess = styled.div`
  display: flex;
  align-items: center;
`

const Slot = styled.div`
  flex: none;
  width: ${({ $w }) => $w}px;
  display: flex;
  justify-content: center;
`

const AutosaveLabel = styled.label`
  flex: none;
  font-size: 8px;
  font-weight: 600;
  width: 96px;
  white-space: nowrap;
`

const Toggle = styled.input`
  appearance: none;
  flex: none;
  width: 32px;
  height: 15px;
  border: 1px solid #fff !important;
  border-radius: 8px;
  display: flex;
  align-items: center;
  padding: 0 2px !important;

  &::before {
    content: '';
    width: 11px;
    height: 11px;
    border-radius: 50%;
    background: #fff;
  }
  &:checked { justify-content: flex-end; }
`

const TitleButton = styled.button`
  flex: none;
  width: ${({ $w }) => $w}px;
  height: 20px;
  display: flex;
  align-items: center;
  justify-content: center;
  color: #fff;
  opacity: ${({ $dim }) => $dim ? 0.4 : 1};
`

const FileName = styled.div`
  display: flex;
  align-items: center;
  gap: 3px;
  margin-left: 8px;
  font-size: 8px;
  font-weight: 600;
  white-space: nowrap;
`

const TitleSearch = styled.label`
  display: flex;
  align-items: center;
  gap: 9px;
  height: 24px;
  padding: 0 9px;
  background: #cfe3d7;
  border: 1px solid #b7cfc1;
  color: #1d6b40;
  font-size: 10px;

  input { flex: 1; }
  input::placeholder { color: #1d6b40; opacity: 1; }
`

const WindowButtons = styled.div`
  display: flex;
  justify-content: flex-end;
  align-items: center;
`

const Avatar = styled.div`
  width: 18px;
  height: 18px;
  margin-right: 10px;
  border-radius: 50%;
  background: #69797e;
  font-size: 8px;
  line-height: 18px;
  text-align: center;
`

/* menu */

const MenuBar = styled.nav`
  display: flex;
  align-items: center;
  height: 23px;
  flex: none;
  padding: 0 9px;
`

const MenuItem = styled.button`
  padding: 0 7px;
  font-size: 10px;
  white-space: nowrap;

  ${({ $active }) => $active && css`
    font-weight: 600;
    &::after {
      content: '';
      display: block;
      height: 2px;
      margin-bottom: -2px;
      background: ${GREEN};
    }
  `}
`

const CommentButton = styled.button`
  display: flex;
  align-items: center;
  gap: 3px;
  height: 18px;
  margin-left: 6px;
  padding: 0 4px;
  border: 1px solid ${({ $primary }) => $primary ? GREEN : '#8a8a8a'};
  border-radius: 3px;
  background: ${({ $primary }) => $primary ? GREEN : '#fff'};
  color: ${({ $primary }) => $primary ? '#fff' : '#262626'};
  font-size: 9px;
`

/* ribbon */

const Ribbon = styled.section`
  display: flex;
  height: 75px;
  flex: none;
  margin: 0 6px;
  padding: 3px 0 2px;
  background: #fff;
  border-radius: 6px;
  box-shadow: 0 1px 2px rgba(0, 0, 0, 0.25);
`

const Group = styled.div`
  display: flex;
  flex-direction: column;
  flex: none;
  width: ${({ $w }) => $w}px;
  border-right: 1px solid #dcdcdc;
`

const GroupBody = styled.div`
  display: flex;
  flex: 1;
`

const GroupName = styled.div`
  display: flex;
  align-items: center;
  justify-content: center;
  height: 12px;
  padding: 0 2px 0 ${({ $shift }) => $shift ? 46 : 2}px;
  font-size: 8px;
  font-weight: 500;
  line-height: 12px;
  white-space: nowrap;

  svg { margin-left: auto; }
  &:has(svg)::before { content: ''; margin-right: auto; }
`

const BigButton = styled.button`
  display: flex;
  flex-direction: column;
  align-items: center;
  flex: none;
  width: ${({ $w }) => $w}px;
  padding-top: 2px;
  font-size: 9px;
  line-height: 12px;
  white-space: nowrap;
  color: ${({ disabled }) => disabled ? '#b5b5b5' : '#262626'};

  > svg:first-child { height: 24px; }
  > span { margin-top: 2px; }
  span svg { display: inline-block; vertical-align: middle; }
  > svg:last-child { margin-top: 3px; }
`

const SmallStack = styled.div`
  display: flex;
  flex-direction: column;
  flex: none;
  width: ${({ $w }) => $w}px;
  padding-left: ${({ $pad }) => $pad ? 9 : 0}px;
`

const SmallButton = styled.button`
  display: flex;
  align-items: center;
  gap: 2px;
  height: ${({ $tall }) => $tall ? 24 : 19}px;
  font-size: 9px;
  white-space: nowrap;

  > svg:first-child { width: 13px; }
`

const Push = styled.span`
  margin-left: ${({ $near }) => $near ? 4 : 10}px;
`

const ToolRows = styled.div`
  display: flex;
  flex-direction: column;
  flex: none;
  padding: 3px 0 0 6px;
  margin-left: ${({ $line }) => $line ? 2 : 0}px;
  border-left: ${({ $line }) => $line ? '1px solid #e3e3e3' : 0};
`

const ToolRow = styled.div`
  display: flex;
  align-items: center;
  height: 24px;
`

const Tool = styled.button`
  display: flex;
  align-items: center;
  justify-content: center;
  width: ${({ $w }) => $w}px;
  height: 18px;
  font-size: 10px;
  border: ${({ $on }) => $on ? '1px solid #767676' : 0};
  border-radius: 3px;
  background: ${({ $on }) => $on ? '#ececec' : 'none'};
`

const Divider = styled.div`
  width: 1px;
  height: 18px;
  margin: 0 2px;
  background: #dcdcdc;
`

const Dropdown = styled.div`
  display: flex;
  align-items: center;
  width: ${({ $w }) => $w}px;
  height: 18px;
  margin-right: 2px;
  padding: 0 2px;
  border: 1px solid #8a8a8a;
  border-radius: 3px;
  font-size: 9px;

  select { flex: 1; min-width: 0; appearance: none; outline: 0; }
`

const Collapse = styled.button`
  margin: auto 6px 3px auto;
`

/* formula bar */

const FormulaBar = styled.div`
  display: flex;
  align-items: center;
  flex: none;
  height: 19px;
  margin: 6px;
  font-size: 10px;
`

const box = css`
  display: flex;
  align-items: center;
  height: 19px;
  background: #fff;
  border: 1px solid #d5d5d5;
  border-radius: 3px;
`

const NameBox = styled.div`
  ${box}
  width: 182px;
  margin-right: 6px;
  padding: 0 3px 0 4px;

  input { flex: 1; }
`

const FxBox = styled.div`
  ${box}
  width: 65px;
  margin: 0 4px 0 6px;
  padding: 0 1px 0 4px;
  justify-content: space-between;
`

const Fx = styled.i`
  font-family: "Liberation Serif", serif;
  font-size: 14px;
  line-height: 14px;
`

const FormulaBox = styled.div`
  ${box}
  flex: 1;
  padding: 0 2px;

  input { flex: 1; }
`

/* sheet */

const SheetArea = styled.main`
  display: flex;
  flex: 1;
  min-height: 0;
`

const Sheet = styled.div`
  display: flex;
  flex-direction: column;
  flex: 1;
  min-width: 0;
  overflow: hidden;
  background: #fff;
`

const ColumnHeads = styled.div`
  display: flex;
  flex: none;
  height: 15px;
  background: #efefef;
  border-bottom: 1px solid #a6a6a6;
  font-size: 10px;
  line-height: 15px;
`

const Corner = styled.div`
  display: flex;
  align-items: center;
  justify-content: flex-end;
  width: 19px;
  padding-right: 2px;
  border-right: 1px solid #bdbdbd;
`

const ColumnHead = styled.div`
  width: ${({ $w }) => $w}px;
  height: 15px;
  flex: none;
  text-align: center;
  border-right: 1px solid #bdbdbd;

  ${({ $active }) => $active && css`
    background: #d2d2d2;
    color: ${GREEN};
    border-bottom: 2px solid ${GREEN};
  `}
`

const SheetBody = styled.div`
  display: flex;
  flex: 1;
  min-height: 0;
`

const RowHeads = styled.div`
  width: 19px;
  flex: none;
  background: #efefef;
  border-right: 1px solid #a6a6a6;
  font-size: 10px;
`

const RowHead = styled.div`
  display: flex;
  align-items: flex-end;
  justify-content: center;
  height: ${({ $h }) => $h}px;
  border-bottom: 1px solid #c3c3c3;
  line-height: 14px;

  ${({ $active }) => $active && css`
    background: #d2d2d2;
    color: ${GREEN};
  `}
`

const SidePanel = styled.div`
  display: flex;
  flex-direction: column;
  width: 223px;
  flex: none;
  padding-top: 13px;
`

const Logo = styled.div`
  display: flex;
  height: 68px;
  padding-left: 10px;
  font-family: Inter, sans-serif;
  font-weight: 700;
`

const LogoName = styled.div`
  margin: 10px 0 0 1px;
  font-size: 31px;
  font-weight: 800;
  line-height: 36px;
  color: #7b22d3;
`

const LogoSub = styled.div`
  margin: -4px 0 0 2px;
  font-size: 11px;
  line-height: 12px;
  color: #b8288f;
`

const SideNav = styled.nav`
  display: flex;
  flex-direction: column;
  gap: 19px;
  padding: 36px 30px 0 18px;
`

const NavButton = styled.button`
  height: 36px;
  border: 1px solid ${({ $gold }) => $gold ? '#c9981a' : '#3f6b2a'};
  border-radius: 6px;
  background: ${({ $gold }) => $gold
    ? 'linear-gradient(#fdf9f0, #ffd966 70%, #ffd55a)'
    : 'linear-gradient(#eef4ec, #70ad47 70%, #6aa842)'};
  box-shadow: 0 2px 3px rgba(60, 80, 50, 0.45);
  color: ${({ $gold }) => $gold ? '#7f6000' : '#375623'};
  font-family: ${SHAPE};
  font-size: ${({ $small }) => $small ? 10 : 12}px;
  font-weight: 700;
`

const SelectedCell = styled.div`
  width: 120px;
  height: 17px;
  margin: 64px 0 0 -1px;
  border: 2px solid ${GREEN};

  &::after {
    content: '';
    display: block;
    width: 4px;
    height: 4px;
    margin: 11px -3px 0 auto;
    background: ${GREEN};
    outline: 1px solid #fff;
  }
`

const MainPanel = styled.div`
  flex: none;
  width: 928px;
  padding-top: 5px;
`

const Banner = styled.h1`
  margin: 0 0 16px;
  height: 45px;
  border: 1px solid #41604f;
  border-radius: 8px;
  background: linear-gradient(#c6e0b4, #b3d49f 40%, #548235);
  color: #375623;
  font-family: ${SHAPE};
  font-size: 26px;
  font-style: italic;
  font-weight: 700;
  line-height: 45px;
  text-align: center;
  text-shadow: 1px 2px 2px rgba(40, 60, 30, 0.5);
`

const Col = styled.col`
  width: ${({ $w }) => $w}px;
`

const LogTable = styled.table`
  margin-left: 16px;
  width: 895px;
  table-layout: fixed;
  border-collapse: collapse;
  font-size: 10px;
  color: #000;

  th, td {
    border: 1px solid #82bb5f;
    white-space: nowrap;
  }
  th {
    position: relative;
    height: 30px;
    padding: 0;
    border-bottom: 2px solid #70ad47;
    font-weight: 700;
  }
  td {
    height: 15px;
    padding: 0 1px;
    line-height: 14px;
  }
  tbody tr:nth-child(odd) { background: #e2efda; }
  tbody tr:last-child td:last-child {
    background: linear-gradient(135deg, transparent 50%, #3a56a5 50%) right bottom / 4px 4px no-repeat;
  }
`

const FilterButton = styled.button`
  position: absolute;
  right: 0;
  bottom: 0;
  width: 13px;
  height: 13px;
  display: flex;
  align-items: center;
  justify-content: center;
  border: 1px solid #b4b8c8;
  background: #fafbfe;
`

const VScroll = styled.div`
  display: flex;
  flex-direction: column;
  align-items: center;
  justify-content: space-between;
  width: 16px;
  padding-top: 2px;
  border-left: 1px solid #e3e3e3;
`

const VThumb = styled.div`
  flex: 1;
  width: 7px;
  margin: 3px 0 6px;
  border-radius: 4px;
  background: #737373;
`

/* sheet tabs */

const TabBar = styled.div`
  display: flex;
  align-items: center;
  height: 25px;
  flex: none;
  border-bottom: 1px solid #cfcfcf;
  font-size: 10px;
`

const Arrows = styled.div`
  display: flex;
  gap: 18px;
  width: 84px;
  padding-left: 21px;
`

const SheetTab = styled.button`
  padding: 0 11px;
  line-height: 14px;
  white-space: nowrap;
  border-right: 1px solid #d0d0d0;

  ${({ $active }) => $active && css`
    align-self: flex-start;
    height: 20px;
    margin: 0 3px;
    padding: 0 7px;
    border: 0;
    border-radius: 0 0 4px 4px;
    background: #fff;
    font-weight: 600;

    span { display: block; line-height: 17px; border-bottom: 2px solid ${GREEN}; }
  `}
`

const AddTab = styled.button`
  margin-left: 31px;
`

const HScroll = styled.div`
  display: flex;
  align-items: center;
  width: 561px;
  margin-right: 16px;
`

const Gap = styled.div`
  width: 12px;
`

const HThumb = styled.div`
  flex: 1;
  height: 7px;
  margin: 0 15px 0 3px;
  border-radius: 4px;
  background: #737373;
`

/* status bar */

const StatusBar = styled.footer`
  display: flex;
  align-items: center;
  height: 16px;
  flex: none;
  padding: 0 6px 0 8px;
  background: #f4f4f4;
  font-size: 8px;

  > span + svg { margin: 0 12px 0 15px; }
`

const Access = styled.div`
  display: flex;
  align-items: center;
  gap: 2px;
  font-weight: 600;
`

const ViewButton = styled.button`
  display: flex;
  align-items: center;
  justify-content: center;
  width: 30px;
  height: 16px;
  background: ${({ $on }) => $on ? '#dedede' : 'none'};
`

const ZoomBox = styled.div`
  display: flex;
  align-items: center;
  gap: 4px;
  margin: 0 9px 0 4px;

  input {
    appearance: none;
    width: 75px;
    height: 16px;
    background: linear-gradient(#999, #999) center / 100% 1px no-repeat;
  }
  input::-webkit-slider-thumb {
    appearance: none;
    width: 4px;
    height: 9px;
    background: #555;
  }
`

/* task bar */

const TaskBar = styled.footer`
  display: flex;
  align-items: stretch;
  height: 30px;
  flex: none;
  background: #d6d6d8;
`

const TaskSearch = styled.label`
  display: flex;
  align-items: center;
  gap: 8px;
  width: 215px;
  height: 29px;
  padding: 0 8px;
  background: #fff;
  font-size: 11px;

  input { flex: 1; }
  input::placeholder { color: #444; opacity: 1; }
`

const TaskButton = styled.button`
  display: flex;
  align-items: center;
  justify-content: center;
  flex: none;
  width: ${({ $w }) => $w}px;
  background: ${({ $open, $front }) => css`
    ${$open ? 'linear-gradient(#c7502a, #c7502a) center bottom / 31px 2px no-repeat' : 'none'}
    ${$front ? ', linear-gradient(#efefef, #efefef) center / 33px 100% no-repeat' : ''}
  `};
`

const Weather = styled.div`
  display: flex;
  align-items: center;
  gap: 6px;
  margin-right: 18px;
  font-size: 10px;
`

const Tray = styled.div`
  display: flex;
  align-items: center;
  gap: 6px;
`

const Clock = styled.div`
  width: 52px;
  align-self: center;
  font-size: 8px;
  line-height: 13px;
  text-align: center;
`

const ShowDesktop = styled.button`
  width: 4px;
  border-left: 1px solid #aaa;
`
